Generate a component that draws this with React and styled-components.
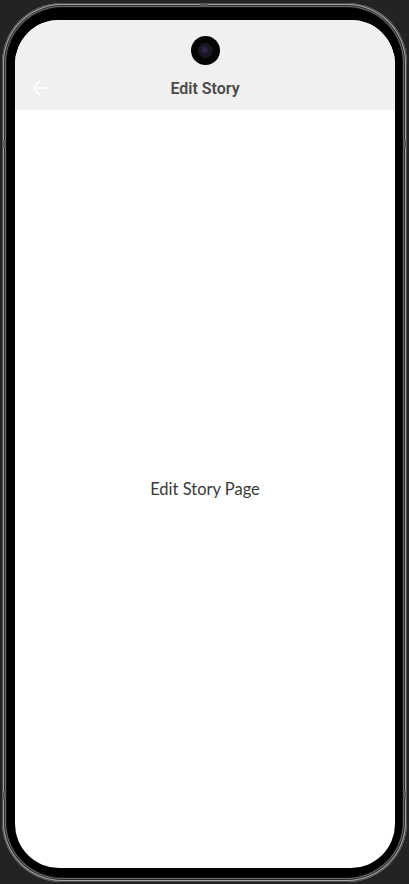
import React from 'react'
import styled, { createGlobalStyle } from 'styled-components'

const Global = createGlobalStyle`
  html, body {
    margin: 0;
    padding: 0;
    background: #232323;
    height: 100%;
  }
  #root {
    height: 100%;
  }
`

const Stage = styled.div`
  width: 409px;
  height: 884px;
  box-sizing: border-box;
  padding: 3px 2px 2px 2px;
  display: flex;
`

const Device = styled.div`
  position: relative;
  flex: 1;
  box-sizing: border-box;
  padding: 17px 12px 14px 13px;
  border-radius: 60px;
  background: #000;
  display: flex;
  box-shadow:
    inset 0 0 0 1px #4a4a4a,
    inset 0 0 0 2px #a5a5a5,
    inset 0 0 0 3px #2a2a2a,
    inset 0 0 0 4px #6a6a6a,
    inset 0 0 0 5px #111;
`

// hardware keys sitting on the frame edge
const SideKey = styled.span`
  position: absolute;
  width: 4px;
  height: 8px;
  background: #5a5a5a;
  top: ${p => p.top}px;
  ${p => (p.right ? 'right: 0;' : 'left: 0;')}
`

const TopKey = styled.span`
  position: absolute;
  top: 0;
  left: 198px;
  width: 8px;
  height: 4px;
  background: #5a5a5a;
`

const Screen = styled.div`
  flex: 1;
  border-radius: 44px;
  overflow: hidden;
  background: #fff;
  display: flex;
  flex-direction: column;
`

const Header = styled.header`
  flex-shrink: 0;
  box-sizing: border-box;
  height: 90px;
  padding-top: 16px;
  background: #f0f0f0;
  display: flex;
  flex-direction: column;
  align-items: center;
  gap: 1px;
`

const Camera = styled.div`
  width: 29px;
  height: 29px;
  border-radius: 50%;
  background: #050505;
  display: flex;
  align-items: center;
  justify-content: center;

  &::after {
    content: '';
    width: 15px;
    height: 15px;
    border-radius: 50%;
    background: radial-gradient(circle at 45% 45%, #3a2a55 0, #1a1528 40%, #161616 70%);
  }
`

const Bar = styled.div`
  align-self: stretch;
  height: 44px;
  display: grid;
  grid-template-columns: 1fr auto 1fr;
  align-items: center;
`

const Back = styled.button`
  justify-self: start;
  margin-left: 13px;
  border: 0;
  background: none;
  padding: 0;
  display: flex;
`

const Title = styled.h1`
  margin: 0;
  font-family: Roboto, 'Liberation Sans', sans-serif;
  font-size: 16px;
  font-weight: 600;
  color: #4a4a4a;
`

const Content = styled.main`
  flex: 1;
  display: flex;
  align-items: center;
  justify-content: center;
`

const Message = styled.p`
  margin: 0;
  font-family: Lato, 'Liberation Sans', sans-serif;
  font-size: 16.5px;
  color: #3a3a3a;
`

const EditStory = () => (
  <Stage>
    <Global />
    <Device>
      <TopKey />
      <SideKey top={137} />
      <SideKey top={137} right />
      <SideKey top={788} />
      <SideKey top={788} right />
      <Screen>
        <Header>
          <Camera />
          <Bar>
            <Back aria-label="Back">
              <svg width="24" height="24" viewBox="0 0 24 24" fill="none" stroke="#fff" strokeWidth="1.5" strokeLinecap="round" strokeLinejoin="round">
                <path d="M19 12H5" />
                <path d="M12 19l-7-7 7-7" />
              </svg>
            </Back>
            <Title>Edit Story</Title>
            <span />
          </Bar>
        </Header>
        <Content>
          <Message>Edit Story Page</Message>
        </Content>
      </Screen>
    </Device>
  </Stage>
)

export default EditStory
